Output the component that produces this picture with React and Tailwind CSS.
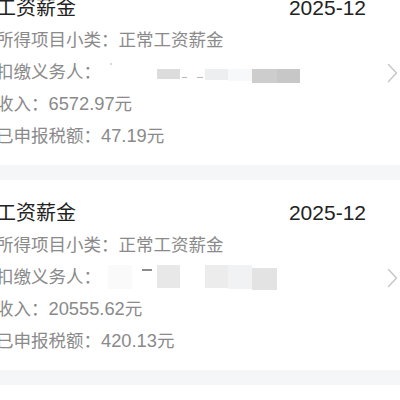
import React from 'react';

const records = [
  {
    title: '工资薪金',
    month: '2025-12',
    subType: '正常工资薪金',
    income: '6572.97',
    tax: '47.19',
    masked: 'a',
  },
  {
    title: '工资薪金',
    month: '2025-12',
    subType: '正常工资薪金',
    income: '20555.62',
    tax: '420.13',
    masked: 'b',
  },
];

// Mosaic blur over the withholding agent's name
const MaskA = () => (
  <div className="flex items-start">
    <div className="ml-[9px] mt-[7px] w-[2px] h-[2px] bg-[#dddddd]" />
    <div className="ml-[45px] mt-[13px] w-[23px] h-[10px] bg-[#dcdcdc]" />
    <div className="ml-[2px] mt-[21px] w-[5px] h-px bg-[#b5b5b5]" />
    <div className="ml-[10px] mt-[21px] w-[6px] h-px bg-[#b5b5b5]" />
    <div className="ml-[2px] mt-[13px] w-[23px] h-[11px] bg-[#eceef0]" />
    <div className="mt-[13px] w-[24px] h-[12px] bg-[#f7f8f9]" />
    <div className="mt-[13px] w-[25px] h-[14px] bg-[#cdcdcd]" />
    <div className="mt-[13px] w-[23px] h-[14px] bg-[#c7c7c7]" />
  </div>
);

const MaskB = () => (
  <div className="flex items-start">
    <div className="ml-[7px] mt-[4px] w-[24px] h-[24px] bg-[#fafafa]" />
    <div className="ml-[10px] mt-[8px] w-[10px] h-[2px] bg-[#8c8c8c]" />
    <div className="ml-[5px] mt-[4px] w-[23px] h-[23px] bg-[#e8e8e8]" />
    <div className="ml-[25px] mt-[4px] w-[23px] h-[23px] bg-[#ececec]" />
    <div className="mt-[4px] w-[24px] h-[24px] bg-[#f1f2f3]" />
    <div className="mt-[7px] w-[25px] h-[22px] bg-[#e3e3e3]" />
  </div>
);

const RecordCard = ({ record }) => (
  <div className="flex items-center h-[190px] bg-white pt-[19px] pb-[13px]">
    <div className="flex-1 min-w-0 ml-[-4px]">
      <div className="flex justify-between items-center h-[28px] leading-[28px] text-[#222222]">
        <span className="text-[20px]">{record.title}</span>
        <span className="text-[21px]">{record.month}</span>
      </div>
      <div className="mt-[2px] text-[17.5px] leading-[32px] text-[#8a8a8a]">
        <div className="h-[32px] whitespace-nowrap">所得项目小类：{record.subType}</div>
        <div className="flex items-start h-[32px] whitespace-nowrap">
          <span>扣缴义务人：</span>
          {record.masked === 'a' ? <MaskA /> : <MaskB />}
        </div>
        <div className="h-[32px] whitespace-nowrap">
          收入：<span className="text-[18.3px]">{record.income}</span>元
        </div>
        <div className="h-[32px] whitespace-nowrap">
          已申报税额：<span className="text-[18.3px]">{record.tax}</span>元
        </div>
      </div>
    </div>
    <svg
      className="w-[11px] h-[20px] ml-[21px] mr-[2px] shrink-0"
      viewBox="0 0 11 20"
      fill="none"
    >
      <polyline
        points="1.5,1.5 9.5,10 1.5,18.5"
        stroke="#c9c9c9"
        strokeWidth="1.6"
        strokeLinecap="round"
        strokeLinejoin="round"
      />
    </svg>
  </div>
);

export default function App() {
  return (
    <div className="w-[400px] h-[400px] overflow-hidden bg-white font-['Liberation_Sans','Noto_Sans_CJK_SC',sans-serif]">
      <div className="-mt-[25px]">
        {records.map((r, i) => (
          <div key={i}>
            <RecordCard record={r} />
            <div className="h-[15px] bg-[#f5f6f8]" />
          </div>
        ))}
      </div>
    </div>
  );
}
